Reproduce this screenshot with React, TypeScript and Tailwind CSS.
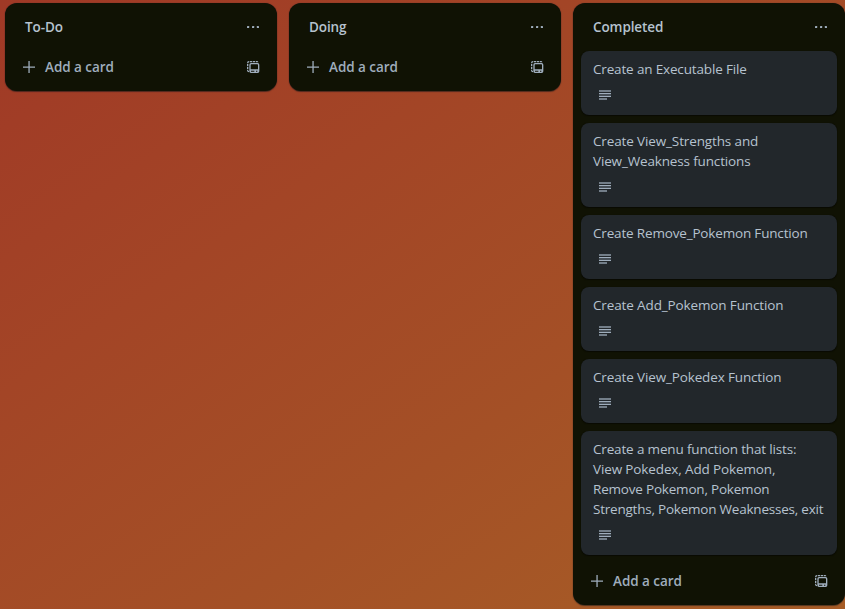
const titles: { lines: { text: string; spacing: string }[] }[] = [
  { lines: [{ text: 'Create an Executable File', spacing: 'tracking-[-0.16px]' }] },
  {
    lines: [
      { text: 'Create View_Strengths and', spacing: 'tracking-[-0.13px]' },
      { text: 'View_Weakness functions', spacing: 'tracking-[-0.15px]' },
    ],
  },
  { lines: [{ text: 'Create Remove_Pokemon Function', spacing: 'tracking-[-0.17px]' }] },
  { lines: [{ text: 'Create Add_Pokemon Function', spacing: 'tracking-[-0.13px]' }] },
  { lines: [{ text: 'Create View_Pokedex Function', spacing: 'tracking-[-0.14px]' }] },
  {
    lines: [
      { text: 'Create a menu function that lists:', spacing: 'tracking-[-0.16px]' },
      { text: 'View Pokedex, Add Pokemon,', spacing: 'tracking-[-0.13px]' },
      { text: 'Remove Pokemon, Pokemon', spacing: 'tracking-[-0.2px]' },
      { text: 'Strengths, Pokemon Weaknesses, exit', spacing: 'tracking-[-0.22px]' },
    ],
  },
];

function DotsIcon() {
  return (
    <svg width="16" height="16" viewBox="0 0 16 16" fill="currentColor" aria-hidden="true">
      <rect x="2" y="7" width="2.200" height="2" rx="0.600" />
      <rect x="7" y="7" width="2.200" height="2" rx="0.600" />
      <rect x="11.800" y="7" width="2.200" height="2" rx="0.600" />
    </svg>
  );
}

function PlusIcon() {
  return (
    <svg width="16" height="16" viewBox="0 0 16 16" fill="currentColor" aria-hidden="true">
      <path d="M7.4 2h1.3v5.4H14v1.3H8.7V14H7.4V8.7H2V7.4h5.4z" />
    </svg>
  );
}

function TemplateIcon() {
  return (
    <svg width="16" height="16" viewBox="0 0 24 24" fill="currentColor" aria-hidden="true">
      <path d="M3 6a3 3 0 0 1 3-3h.5v2H6a1 1 0 0 0-1 1v.5H3zM7.500 3h3.500v2H7.500zM12 3h3.500v2H12zM16.500 3H18a2 2 0 0 1 2 2h-3.500zM3 7.500h2V11H3zM3 12h2v3.500H3zM3 16.500h2V18h1v2a3 3 0 0 1-3-3z" />
      <path
        fillRule="evenodd"
        clipRule="evenodd"
        d="M9 6h10a2.500 2.500 0 0 1 2.500 2.500v10A2.500 2.500 0 0 1 19 21H9a2.500 2.500 0 0 1-2.500-2.500v-10A2.500 2.500 0 0 1 9 6zm.5 2a1 1 0 0 0-1 1v6.500h11V9a1 1 0 0 0-1-1zm-.5 9.500v1.500h5v-1.500zm7.500 0v1.500h2v-1.500z"
      />
    </svg>
  );
}

function DescriptionIcon() {
  return (
    <svg width="16" height="16" viewBox="0 0 16 16" fill="currentColor" aria-hidden="true">
      <path d="M2 3h12v2H2z" opacity="0.65" />
      <path d="M2 6h12v1H2zM2 9h12v1H2z" />
      <path d="M2 7h12v1H2zM2 8h12v1H2z" opacity="0.3" />
      <path d="M2 11h8v2H2z" opacity="0.65" />
    </svg>
  );
}

function Header({ name }: { name: string }) {
  return (
    <header className="flex h-12 items-center justify-between pr-4 pl-5">
      <h2 className="text-[13.5px] leading-5 font-semibold tracking-[-0.1px] text-[#b6c2cf]">{name}</h2>
      <button type="button" aria-label="List actions">
        <DotsIcon />
      </button>
    </header>
  );
}

function Footer() {
  return (
    <footer className="flex h-8 items-center justify-between px-4">
      <button type="button" className="flex items-center gap-2">
        <PlusIcon />
        <span className="text-[13.5px] leading-5 font-semibold tracking-[-0.05px]">Add a card</span>
      </button>
      <button type="button" aria-label="Create from template">
        <TemplateIcon />
      </button>
    </footer>
  );
}

const listClass =
  'w-[272px] shrink-0 rounded-xl bg-[#101204] pb-2 text-[#9fadbc] shadow-[0_1px_1px_#09121680,0_0_1px_#091e4280]';

export default function App() {
  return (
    <main className="flex h-[609px] w-[845px] items-start gap-3 overflow-hidden bg-[linear-gradient(145deg,#a03926_0%,#a34526_33%,#a45026_64%,#a65926_86%,#a65c26_100%)] pt-[3px] pl-[5px] font-['Open_Sans','Noto_Sans',sans-serif]">
      <section className={listClass}>
        <Header name="To-Do" />
        <Footer />
      </section>
      <section className={listClass}>
        <Header name="Doing" />
        <Footer />
      </section>
      <section className={listClass}>
        <Header name="Completed" />
        <ol className="mb-2.5 flex flex-col gap-2 px-2">
          {titles.map(({ lines }) => (
            <li
              key={lines[0].text}
              className="rounded-lg bg-[#22272b] px-3 pt-2 pb-3 shadow-[0_1px_1px_#03040480,0_0_1px_#03040480]"
            >
              <p className="text-[13.5px] leading-5 whitespace-nowrap text-[#b6c2cf]">
                {lines.map((line) => (
                  <span key={line.text} className={`block ${line.spacing}`}>
                    {line.text}
                  </span>
                ))}
              </p>
              <div className="mt-2 ml-1">
                <DescriptionIcon />
              </div>
            </li>
          ))}
        </ol>
        <Footer />
      </section>
    </main>
  );
}
